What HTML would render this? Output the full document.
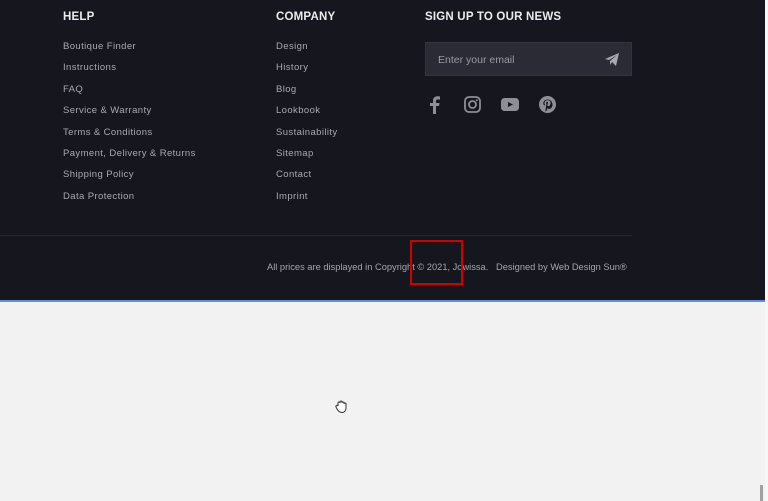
<!DOCTYPE html>
<html><head><meta charset="utf-8"><style>
*{margin:0;padding:0;box-sizing:border-box}
body{width:768px;height:501px;background:#f2f2f2;font-family:"Liberation Sans",sans-serif;position:relative;overflow:hidden}
.ft{position:absolute;left:0;top:0;width:765px;height:300px;background:#16161f}
.sb{position:absolute;left:765px;top:0;width:3px;height:501px;background:#f6f6f6}
.blue{position:absolute;left:0;top:300px;width:765px;height:2px;background:#5b8ee6}
.h{position:absolute;top:11px;color:#ececec;font-size:11.5px;font-weight:bold;letter-spacing:.2px}
.col{position:absolute;top:41px}
.col div{color:#a9a9b0;font-size:9.5px;letter-spacing:.4px;height:21.4px;line-height:12px}
.inp{position:absolute;left:425px;top:42px;width:207px;height:34px;background:#2b2b35;border:1px solid #34343e}
.inp span{position:absolute;left:12px;top:11px;color:#9a9aa2;font-size:10.5px}
.line{position:absolute;left:0;top:235px;width:632px;height:1px;background:#24242e}
.copy{position:absolute;left:267px;top:262px;color:#a5a5ad;font-size:9.3px}
.red{position:absolute;left:410px;top:240px;width:53px;height:45px;border:2px solid #d40000}
</style></head><body>
<div class="ft">
<div class="h" style="left:63px">HELP</div>
<div class="h" style="left:276px">COMPANY</div>
<div class="h" style="left:425px">SIGN UP TO OUR NEWS</div>
<div class="col" style="left:63px"><div>Boutique Finder</div><div>Instructions</div><div>FAQ</div><div>Service &amp; Warranty</div><div>Terms &amp; Conditions</div><div>Payment, Delivery &amp; Returns</div><div>Shipping Policy</div><div>Data Protection</div></div>
<div class="col" style="left:276px"><div>Design</div><div>History</div><div>Blog</div><div>Lookbook</div><div>Sustainability</div><div>Sitemap</div><div>Contact</div><div>Imprint</div></div>
<div class="inp"><span>Enter your email</span>
<svg style="position:absolute;left:179px;top:10px" width="14" height="13" viewBox="0 0 14 13"><path d="M0 6 L14 0 L11 13 L7 9 L5 12 L5 8 L12 2 L4 7 Z" fill="#a8a8b0"/></svg></div>
<svg style="position:absolute;left:429px;top:96px" width="12" height="18" viewBox="0 0 12 18"><path d="M7 18V10h3l.5-3H7V5c0-1 .4-1.5 1.5-1.5H11V.5C10.5.4 9.5.3 8.5.3 6 .3 4 1.8 4 4.6V7H1v3h3v8z" fill="#8e8e96"/></svg>
<svg style="position:absolute;left:464px;top:96px" width="17" height="17" viewBox="0 0 17 17"><rect x="1" y="1" width="15" height="15" rx="4" fill="none" stroke="#8e8e96" stroke-width="1.8"/><circle cx="8.5" cy="8.5" r="3.5" fill="none" stroke="#8e8e96" stroke-width="1.8"/><circle cx="12.8" cy="4.2" r="1" fill="#8e8e96"/></svg>
<svg style="position:absolute;left:501px;top:98px" width="18" height="13" viewBox="0 0 18 13"><rect x="0" y="0" width="18" height="13" rx="3.5" fill="#8e8e96"/><path d="M7 4 L12 6.5 L7 9Z" fill="#16161f"/></svg>
<svg style="position:absolute;left:539px;top:96px" width="17" height="17" viewBox="0 0 17 17"><circle cx="8.5" cy="8.5" r="8.5" fill="#8e8e96"/><path d="M8.8 3.5C5.8 3.5 4.3 5.5 4.3 7.3c0 1 .4 2 1.3 2.3l.4-1c-.3-.4-.5-.8-.5-1.4 0-1.7 1.3-3 3.2-3 1.8 0 2.8 1 2.8 2.5 0 2-.9 3.5-2.1 3.5-.7 0-1.2-.6-1-1.3.2-.8.6-1.7.6-2.3 0-1.3-1.8-1.2-1.8.5 0 .5.2.8.2.8L6.3 15l1 .3 1.2-3.3c.3.5 1 .9 1.6.9 2 0 3.4-1.9 3.4-4.3 0-2.9-2.2-5.1-4.7-5.1z" fill="#16161f"/></svg>
<div class="line"></div>
<div class="copy">All prices are displayed in Copyright © 2021, Jowissa.&nbsp;&nbsp; Designed by Web Design Sun®</div>
<div class="red"></div>
</div>
<div class="blue"></div>
<div class="sb"></div>
<div style="position:absolute;left:760px;top:485px;width:3px;height:16px;background:#a0a0a0"></div>
<svg style="position:absolute;left:335px;top:400px" width="12" height="13" viewBox="0 0 12 13"><path d="M3 6V3a1 1 0 012 0V2a1 1 0 012 0v1a1 1 0 012 0v1a1 1 0 012 0v4c0 3-2 4.5-4 4.5S3.5 11.5 2 9L1 7a1 1 0 012-1z" fill="#fff" stroke="#333" stroke-width="1"/></svg>
</body></html>
